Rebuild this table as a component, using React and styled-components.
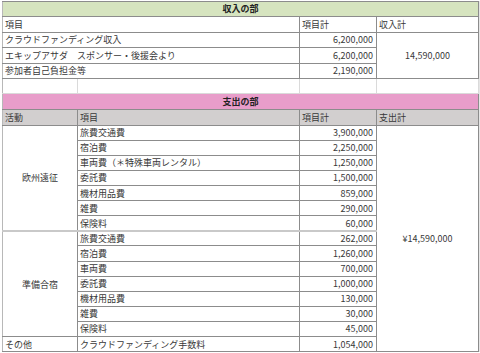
import React from "react";
import styled, { createGlobalStyle } from "styled-components";

const GlobalStyle = createGlobalStyle`
  html, body {
    margin: 0;
    padding: 0;
    background: #ffffff;
  }
  body {
    font-family: "Noto Sans CJK JP", "Noto Sans", sans-serif;
    color: #3c3c3c;
  }
`;

const Sheet = styled.div`
  display: flex;
  padding: 1px 0 0 2px;
  width: 480px;
  box-sizing: border-box;
`;

const Table = styled.table`
  border-collapse: collapse;
  table-layout: fixed;
  width: 476px;
  font-size: 9px;
  line-height: 1;
`;

const Gutter = styled.div`
  width: 2px;
  background: #e6e6e6;
`;

const Cell = styled.td`
  height: ${(p) => (p.$h || 15.3) - 1}px;
  padding: 0 ${(p) => (p.$align === "right" ? "3px" : "2px")};
  border: 1px solid ${(p) => (p.$faint ? "#dadada" : "#8c8c8c")};
  border-top: ${(p) => (p.$sep ? "2px solid #c9c9c9" : undefined)};
  background: ${(p) => p.$bg || "#ffffff"};
  text-align: ${(p) => p.$align || "left"};
  font-weight: ${(p) => (p.$bold ? 700 : 400)};
  color: ${(p) => (p.$bold ? "#222" : "#383838")};
  white-space: nowrap;
  overflow: hidden;
  vertical-align: middle;
  &:first-child {
    border-left-color: #b8b8b8;
  }
`;

const income = [
  ["クラウドファンディング収入", "6,200,000"],
  ["エキップアサダ　スポンサー・後援会より", "6,200,000"],
  ["参加者自己負担金等", "2,190,000"],
];

const groups = [
  {
    name: "欧州遠征",
    items: [
      ["旅費交通費", "3,900,000"],
      ["宿泊費", "2,250,000"],
      ["車両費（＊特殊車両レンタル）", "1,250,000"],
      ["委託費", "1,500,000"],
      ["機材用品費", "859,000"],
      ["雑費", "290,000"],
      ["保険料", "60,000"],
    ],
  },
  {
    name: "準備合宿",
    items: [
      ["旅費交通費", "262,000"],
      ["宿泊費", "1,260,000"],
      ["車両費", "700,000"],
      ["委託費", "1,000,000"],
      ["機材用品費", "130,000"],
      ["雑費", "30,000"],
      ["保険料", "45,000"],
    ],
  },
  {
    name: "その他",
    left: true,
    items: [["クラウドファンディング手数料", "1,054,000"]],
  },
];

const GREEN = "#d6e4bf";
const PINK = "#e89dca";
const GRAY = "#d2cfcf";

function IncomeSection() {
  return (
    <>
      <tr>
        <Cell colSpan={4} $bg={GREEN} $bold $align="center" $h={14.5}>
          収入の部
        </Cell>
      </tr>
      <tr>
        <Cell colSpan={2} $h={16}>項目</Cell>
        <Cell $h={16}>項目計</Cell>
        <Cell $h={16}>収入計</Cell>
      </tr>
      {income.map(([label, amount], i) => (
        <tr key={label}>
          <Cell colSpan={2} $h={15.5}>{label}</Cell>
          <Cell $align="right" $h={15.5}>{amount}</Cell>
          {i === 0 && (
            <Cell rowSpan={3} $align="center">
              14,590,000
            </Cell>
          )}
        </tr>
      ))}
      <tr>
        <Cell $faint $h={15.3} />
        <Cell $faint />
        <Cell $faint />
        <Cell $faint />
      </tr>
    </>
  );
}

function ExpenseSection() {
  let first = true;
  return (
    <>
      <tr>
        <Cell colSpan={4} $bg={PINK} $bold $align="center" $h={16}>
          支出の部
        </Cell>
      </tr>
      <tr>
        <Cell $bg={GRAY} $h={15.2}>活動</Cell>
        <Cell $bg={GRAY}>項目</Cell>
        <Cell $bg={GRAY}>項目計</Cell>
        <Cell $bg={GRAY}>支出計</Cell>
      </tr>
      {groups.map((g, gi) =>
        g.items.map(([label, amount], i) => {
          const showTotal = first;
          first = false;
          const sep = gi === 1 && i === 0;
          const h = sep ? 14.2 : 15.1;
          return (
            <tr key={g.name + label}>
              {i === 0 && (
                <Cell
                  rowSpan={g.items.length}
                  $align={g.left ? "left" : "center"}
                  $sep={sep}
                  $h={h}
                >
                  {g.name}
                </Cell>
              )}
              <Cell $sep={sep} $h={h}>{label}</Cell>
              <Cell $sep={sep} $align="right" $h={h}>{amount}</Cell>
              {showTotal && (
                <Cell rowSpan={15} $align="center">
                  ¥14,590,000
                </Cell>
              )}
            </tr>
          );
        })
      )}
    </>
  );
}

export default function App() {
  return (
    <>
      <GlobalStyle />
      <Sheet>
        <Table>
          <colgroup>
            <col style={{ width: 75 }} />
            <col style={{ width: 222 }} />
            <col style={{ width: 77 }} />
            <col style={{ width: 102 }} />
          </colgroup>
          <tbody>
            <IncomeSection />
            <ExpenseSection />
          </tbody>
        </Table>
        <Gutter />
      </Sheet>
    </>
  );
}
